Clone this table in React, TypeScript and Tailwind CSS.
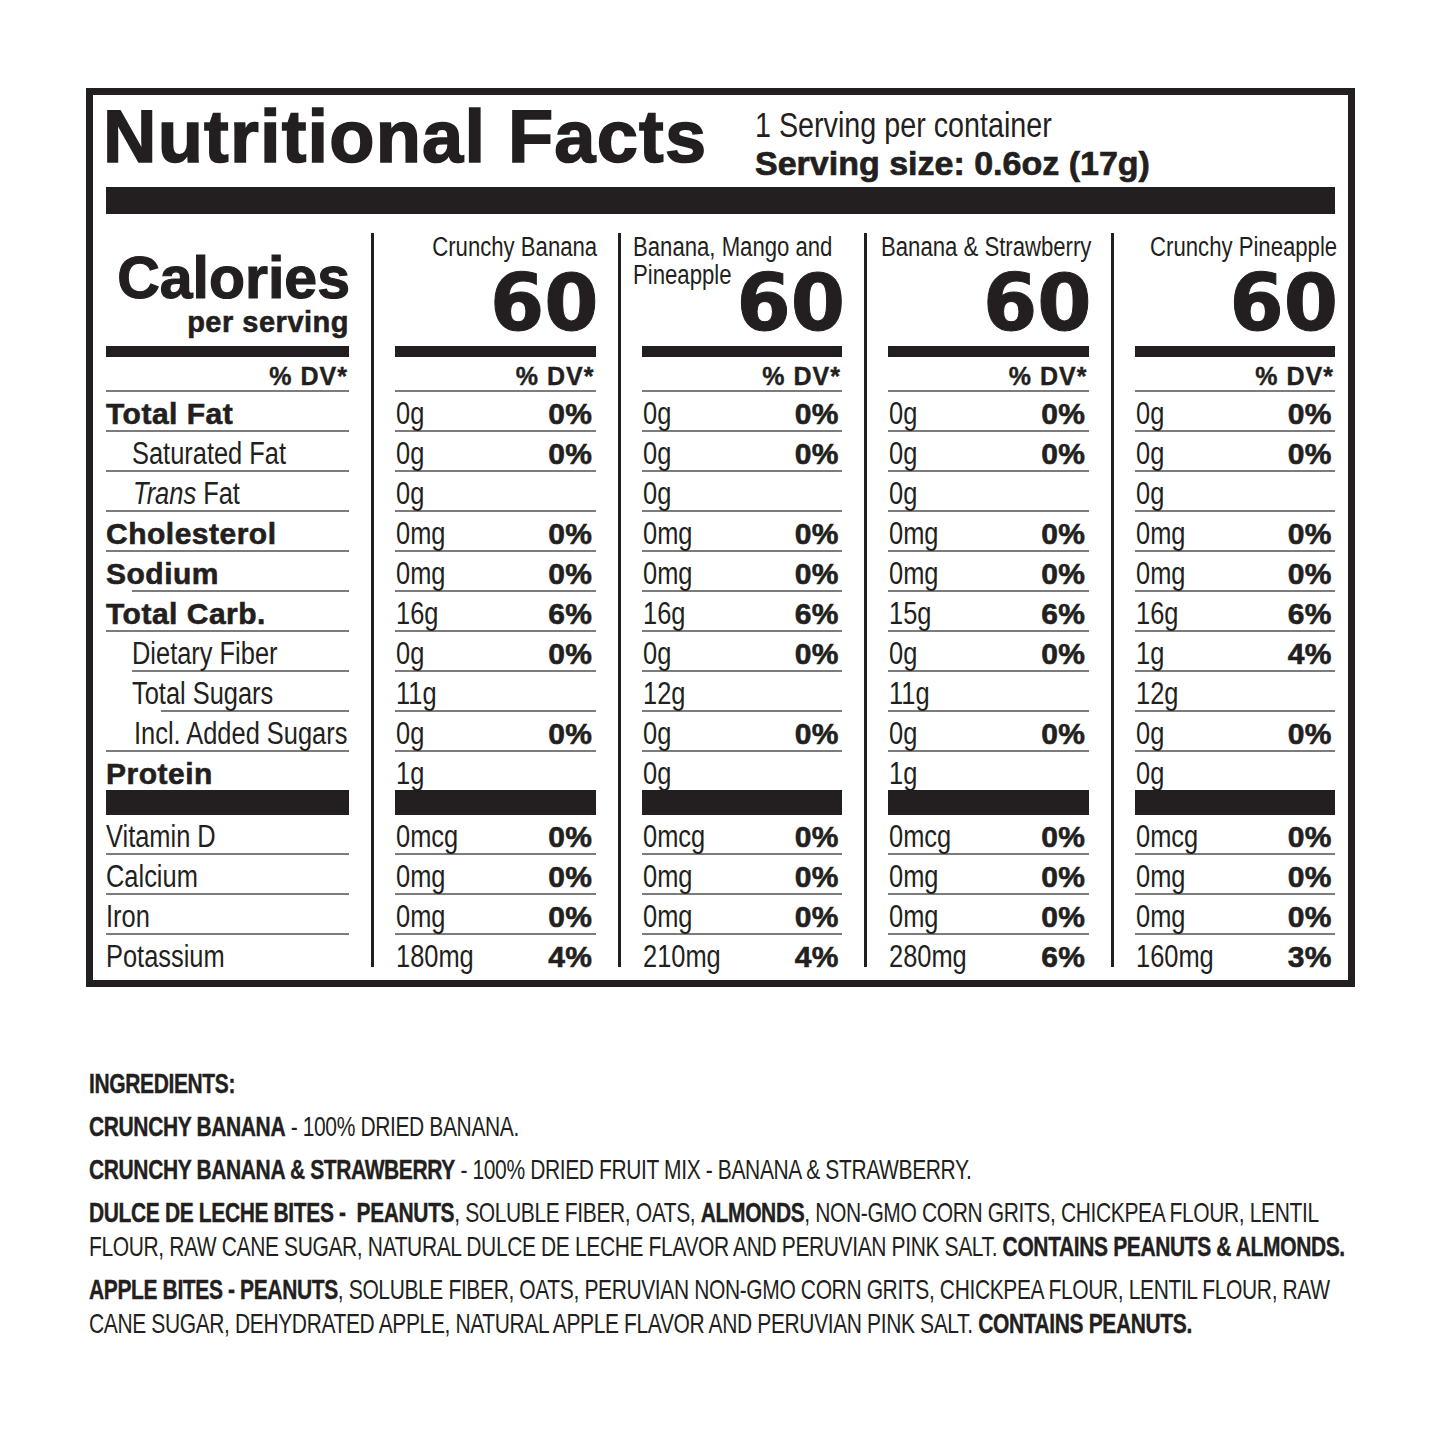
const BOLD = "font-['Liberation_Sans',Arial,sans-serif] font-bold";
const REG = "font-['Liberation_Sans',Arial,sans-serif] font-normal";
const BIG = "font-['DejaVu_Sans',sans-serif] font-bold";

// Liberation Sans squeezed sideways to stand in for the condensed face of the label
function N({ children, right = false, className = '' }: { children: React.ReactNode; right?: boolean; className?: string }) {
  return (
    <span className={`inline-block whitespace-nowrap scale-x-[0.82] ${right ? 'origin-right' : 'origin-left'} ${className}`}>
      {children}
    </span>
  );
}

type Label = { name: React.ReactNode; bold?: boolean; indent?: string; line?: string };

const topLabels: Label[] = [
  { name: 'Total Fat', bold: true },
  { name: 'Saturated Fat', indent: 'pl-[26px]' },
  { name: <><i>Trans</i> Fat</>, indent: 'pl-[27px]' },
  { name: 'Cholesterol', bold: true },
  { name: 'Sodium', bold: true, line: 'ml-[26px]' },
  { name: 'Total Carb.', bold: true },
  { name: 'Dietary Fiber', indent: 'pl-[26px]', line: 'ml-[26px]' },
  { name: 'Total Sugars', indent: 'pl-[26px]', line: 'ml-[55px]' },
  { name: 'Incl. Added Sugars', indent: 'pl-[28px]' },
  { name: 'Protein', bold: true, line: 'none' },
];

const bottomLabels: Label[] = [
  { name: 'Vitamin D' },
  { name: 'Calcium' },
  { name: 'Iron' },
  { name: 'Potassium', line: 'none' },
];

type Product = {
  name: string;
  layout: 'right' | 'left' | 'wrap';
  values: [string, string][];
};

const base = (carb: string, fiber: [string, string], sugars: string, protein: string, potassium: [string, string]): [string, string][] => [
  ['0g', '0%'],
  ['0g', '0%'],
  ['0g', ''],
  ['0mg', '0%'],
  ['0mg', '0%'],
  [carb, '6%'],
  fiber,
  [sugars, ''],
  ['0g', '0%'],
  [protein, ''],
  ['0mcg', '0%'],
  ['0mg', '0%'],
  ['0mg', '0%'],
  potassium,
];

const products: Product[] = [
  { name: 'Crunchy Banana', layout: 'right', values: base('16g', ['0g', '0%'], '11g', '1g', ['180mg', '4%']) },
  { name: 'Banana, Mango and', layout: 'wrap', values: base('16g', ['0g', '0%'], '12g', '0g', ['210mg', '4%']) },
  { name: 'Banana & Strawberry', layout: 'left', values: base('15g', ['0g', '0%'], '11g', '1g', ['280mg', '6%']) },
  { name: 'Crunchy Pineapple', layout: 'right', values: base('16g', ['1g', '4%'], '12g', '0g', ['160mg', '3%']) },
];

function Rule({ className = '' }: { className?: string }) {
  return <div className={`h-[2px] bg-[#7d7b7b] ${className}`} />;
}

function DvRow() {
  return (
    <>
      <div className={`h-[33px] pt-[3px] leading-[33px] text-right text-[25px] ${BOLD} tracking-[1px] pr-[1px] [-webkit-text-stroke:0.4px_#231f20]`}>
        % DV*
      </div>
      <Rule />
    </>
  );
}

function LabelColumn() {
  const renderRow = (l: Label, i: number) => (
    <div key={i}>
      <div
        className={`h-[38px] pt-[3px] leading-[38px] whitespace-nowrap ${l.indent ?? ''} ${
          l.bold ? `${BOLD} text-[30px] tracking-[0.5px] [-webkit-text-stroke:0.6px_#231f20]` : `${REG} text-[31px]`
        }`}
      >
        {l.bold ? l.name : <N>{l.name}</N>}
      </div>
      {l.line !== 'none' && <Rule className={l.line ?? ''} />}
    </div>
  );
  return (
    <div className="w-[243px] shrink-0">
      <div className="h-[113px] flex flex-col items-end justify-end pb-[7px]">
        <div className={`${BOLD} text-[59px] leading-[56px] -mr-[1px] [-webkit-text-stroke:1.2px_#231f20]`}>Calories</div>
        <div className={`${BOLD} text-[29px] leading-[33px] tracking-[0.5px] [-webkit-text-stroke:0.6px_#231f20]`}>per serving</div>
      </div>
      <div className="h-[11px] bg-[#231f20]" />
      <DvRow />
      {topLabels.map(renderRow)}
      <div className="h-[25px] bg-[#231f20]" />
      {bottomLabels.map(renderRow)}
    </div>
  );
}

function Sixty() {
  return (
    <div className={`${BIG} text-[78px] leading-[78px] mb-[4px] -mr-[3px] shrink-0 [-webkit-text-stroke:1px_#231f20]`}>60</div>
  );
}

function ProductHeader({ p }: { p: Product }) {
  const name = `${REG} text-[27px] leading-[30px] whitespace-nowrap`;
  if (p.layout === 'wrap') {
    return (
      <div className="h-[113px] flex flex-col">
        <div className={`${name} -mt-[1px] -ml-[9px]`}>
          <N>{p.name}</N>
        </div>
        <div className="flex-1 flex items-end">
          <div className={`${name} self-start -mt-[2px] -ml-[9px] flex-1 min-w-0`}>
            <N>Pineapple</N>
          </div>
          <Sixty />
        </div>
      </div>
    );
  }
  const right = p.layout === 'right';
  return (
    <div className={`h-[113px] flex flex-col ${right ? 'items-end' : 'items-start'}`}>
      <div className={`${name} -mt-[1px] ${right ? '-mr-[2px]' : '-ml-[7px]'}`}>
        <N right={right}>{p.name}</N>
      </div>
      <div className="flex-1 flex items-end self-end">
        <Sixty />
      </div>
    </div>
  );
}

function ProductColumn({ p }: { p: Product }) {
  const renderRow = ([v, pct]: [string, string], i: number, last: boolean) => (
    <div key={i}>
      <div className="h-[38px] pt-[3px] leading-[38px] flex justify-between whitespace-nowrap">
        <span className={`${REG} text-[31px] pl-[1px]`}>
          <N>{v}</N>
        </span>
        <span className={`${BOLD} text-[30px] tracking-[0.5px] pr-[3px] [-webkit-text-stroke:0.6px_#231f20]`}>{pct}</span>
      </div>
      {!last && <Rule />}
    </div>
  );
  return (
    <div className="flex-1 min-w-0">
      <ProductHeader p={p} />
      <div className="h-[11px] bg-[#231f20]" />
      <DvRow />
      {p.values.slice(0, 10).map((c, i) => renderRow(c, i, i === 9))}
      <div className="h-[25px] bg-[#231f20]" />
      {p.values.slice(10).map((c, i) => renderRow(c, i + 10, i === 3))}
    </div>
  );
}

function Para({ children }: { children: React.ReactNode }) {
  return (
    <p className="w-max whitespace-nowrap origin-left scale-x-[0.75] [&_b]:[-webkit-text-stroke:0.4px_#231f20]">{children}</p>
  );
}

export default function App() {
  return (
    <div className="min-h-[1445px] bg-white text-[#231f20] pt-[88px]">
      <div className="ml-[86px] w-[1269px] border-[7px] border-[#231f20] pt-[5px] pb-[7px] px-[13px]">
        <div className="h-[87px] flex items-start">
          <div className="w-[649px] shrink-0">
            <div className={`${BOLD} text-[74px] leading-[74px] -ml-[3px] tracking-[1.2px] [-webkit-text-stroke:1.6px_#231f20]`}>
              Nutritional Facts
            </div>
          </div>
          <div className="mt-[6px] leading-[38px] whitespace-nowrap">
            <div className={`${REG} text-[35px]`}>
              <N>1 Serving per container</N>
            </div>
            <div className={`${BOLD} text-[34px] [-webkit-text-stroke:0.7px_#231f20]`}>Serving size: 0.6oz (17g)</div>
          </div>
        </div>
        <div className="h-[27px] bg-[#231f20]" />
        <div className="mt-[19px] flex">
          <LabelColumn />
          {products.map((p, i) => (
            <div key={i} className="flex-1 flex min-w-0">
              <div className="ml-[22px] mr-[21px] w-[3px] bg-[#231f20] mb-[6px] shrink-0" />
              <ProductColumn p={p} />
            </div>
          ))}
        </div>
      </div>

      <div className={`ml-[89px] mt-[80px] overflow-hidden text-[28px] leading-[34px] tracking-[-0.5px] ${REG} space-y-[9px]`}>
        <Para>
          <b>INGREDIENTS:</b>
        </Para>
        <Para>
          <b>CRUNCHY BANANA</b> - 100% DRIED BANANA.
        </Para>
        <Para>
          <b>CRUNCHY BANANA &amp; STRAWBERRY</b> - 100% DRIED FRUIT MIX - BANANA &amp; STRAWBERRY.
        </Para>
        <Para>
          <b>DULCE DE LECHE BITES - &nbsp;PEANUTS</b>, SOLUBLE FIBER, OATS, <b>ALMONDS</b>, NON-GMO CORN GRITS, CHICKPEA FLOUR, LENTIL
          <br />
          FLOUR, RAW CANE SUGAR, NATURAL DULCE DE LECHE FLAVOR AND PERUVIAN PINK SALT. <b>CONTAINS PEANUTS &amp; ALMONDS.</b>
        </Para>
        <Para>
          <b>APPLE BITES - PEANUTS</b>, SOLUBLE FIBER, OATS, PERUVIAN NON-GMO CORN GRITS, CHICKPEA FLOUR, LENTIL FLOUR, RAW
          <br />
          CANE SUGAR, DEHYDRATED APPLE, NATURAL APPLE FLAVOR AND PERUVIAN PINK SALT. <b>CONTAINS PEANUTS.</b>
        </Para>
      </div>
    </div>
  );
}
